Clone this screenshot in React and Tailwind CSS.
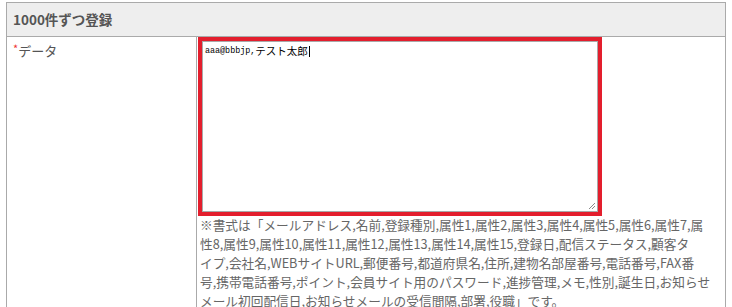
export default function App() {
  const noteLines = [
    '※書式は「メールアドレス,名前,登録種別,属性1,属性2,属性3,属性4,属性5,属性6,属性7,属',
    '性8,属性9,属性10,属性11,属性12,属性13,属性14,属性15,登録日,配信ステータス,顧客タ',
    'イプ,会社名,WEBサイトURL,郵便番号,都道府県名,住所,建物名部屋番号,電話番号,FAX番',
    '号,携帯電話番号,ポイント,会員サイト用のパスワード,進捗管理,メモ,性別,誕生日,お知らせ',
    'メール初回配信日,お知らせメールの受信間隔,部署,役職」です。',
  ];

  return (
    <div className="w-[732px] h-[307px] overflow-hidden bg-white pt-[2px] pl-[6px] font-['Noto_Sans_CJK_JP',sans-serif] text-[#555]">
      <div className="w-[720px] border border-[#aaa]">
        {/* Section header */}
        <div className="h-[34px] bg-[#eee] border-b border-[#aaa] flex items-center pl-[6px]">
          <span className="text-[13.5px] font-bold leading-none">1000件ずつ登録</span>
        </div>

        {/* Form row */}
        <div className="flex h-[300px]">
          <div className="w-[190px] shrink-0 border-r border-[#aaa] pl-[6px] pt-0">
            <span className="text-[13px] leading-[22px]">
              <span className="text-[#e33] text-[11px] align-top">*</span>データ
            </span>
          </div>

          <div className="flex-1 pl-[1px]">
            <div className="w-[404px] h-[179px] border-[4px] border-[#e31e2d]">
              <div className="relative h-full border border-[#a9a9a9] bg-white pl-[2px] pt-[3px]">
                <div className="flex items-center h-[13px] text-black">
                  <span className="font-['Liberation_Mono',monospace] text-[8.4px] leading-none">aaa@bbbjp,</span>
                  <span className="text-[10.5px] leading-none">テスト太郎</span>
                  <span className="w-px h-[11px] bg-black ml-[1px]"></span>
                </div>
                <svg className="absolute right-[1px] bottom-[1px]" width="8" height="8" viewBox="0 0 8 8">
                  <line x1="1" y1="7" x2="7" y2="1" stroke="#8a8a8a" strokeWidth="1" />
                  <line x1="4" y1="7" x2="7" y2="4" stroke="#8a8a8a" strokeWidth="1" />
                </svg>
              </div>
            </div>
            <div className="pl-[2px] -mt-[1px] text-[12.7px] leading-[19px] text-[#666]">
              {noteLines.map((line) => (
                <div key={line} className="whitespace-nowrap">{line}</div>
              ))}
            </div>
          </div>
        </div>
      </div>
    </div>
  );
}
